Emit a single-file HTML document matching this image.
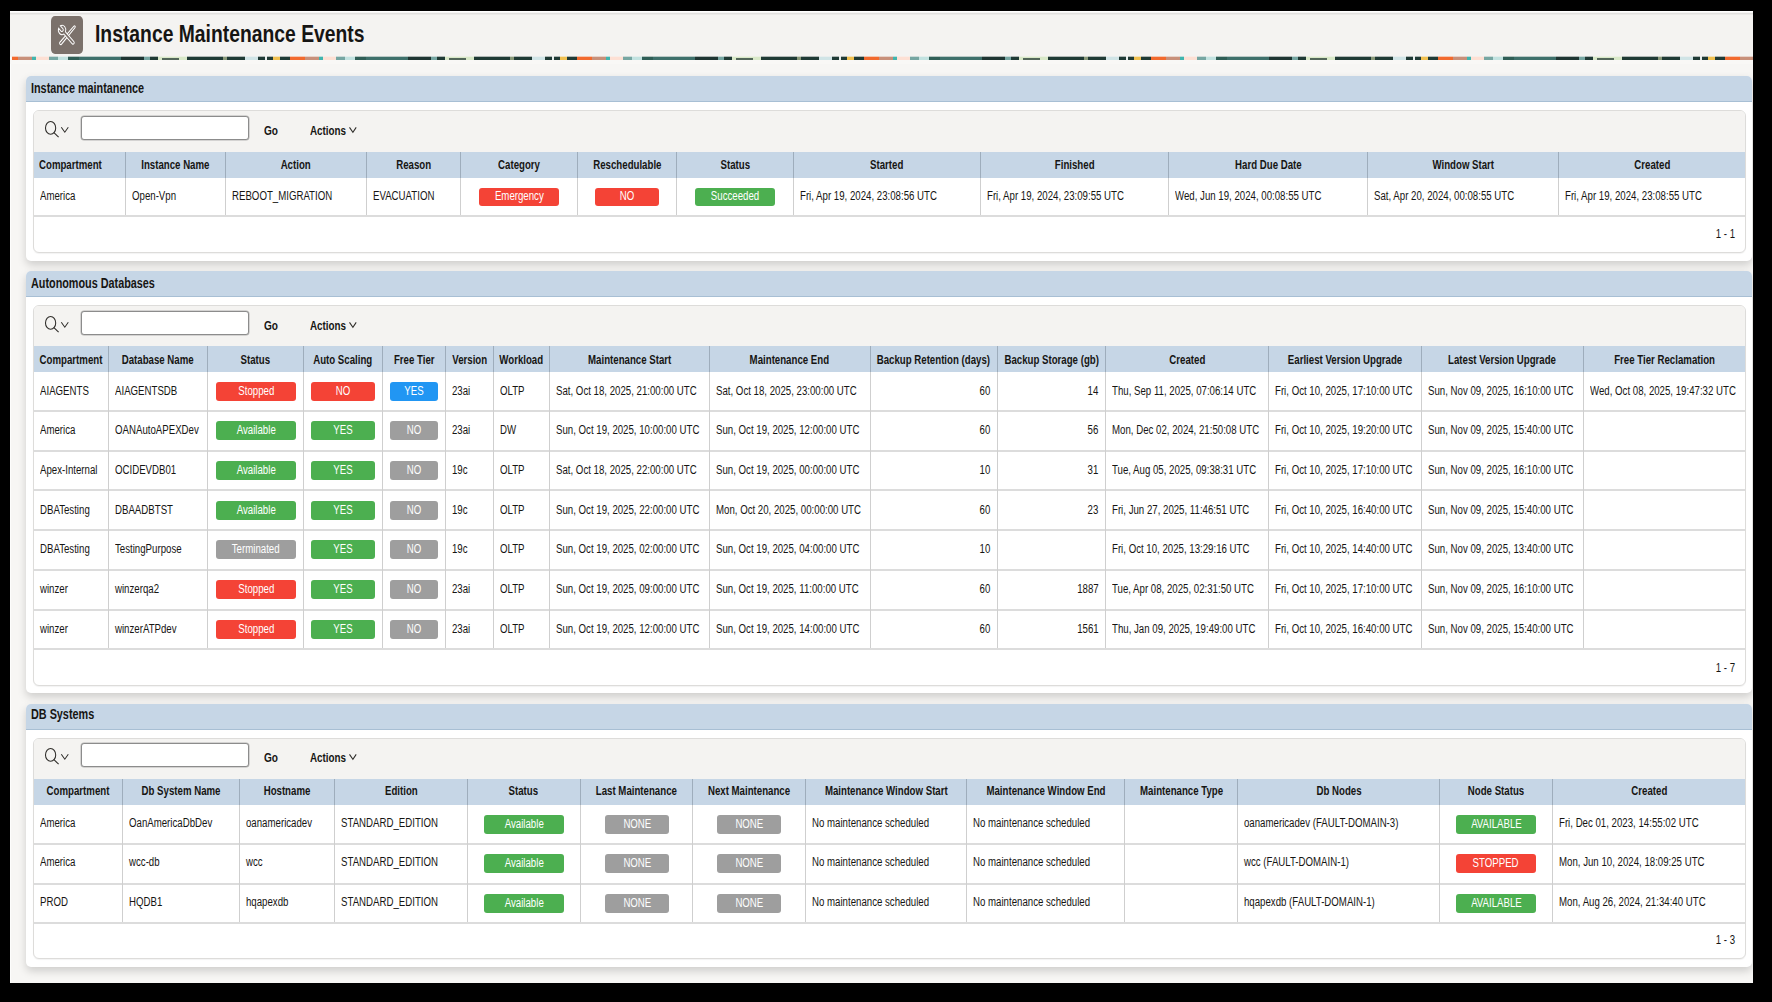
<!DOCTYPE html>
<html><head><meta charset="utf-8"><style>
html,body{margin:0;padding:0}
body{width:1772px;height:1002px;background:#000;position:relative;overflow:hidden;font-family:"Liberation Sans",sans-serif}
.t{position:absolute;white-space:nowrap;line-height:1;transform-origin:0 0;transform:scaleX(0.805)}
.tc{position:absolute;white-space:nowrap;line-height:1;text-align:center}
.tc span{display:inline-block;transform:scaleX(0.805);transform-origin:50% 0}
.tr{position:absolute;white-space:nowrap;line-height:1;text-align:right}
.tr span{display:inline-block;transform:scaleX(0.805);transform-origin:100% 0}
.band2{background-image:linear-gradient(90deg,transparent 0px 12px,#3a4f45 12px 29px,transparent 29px 287px);background-size:287px 100%;background-repeat:repeat-x;background-position:138px 0;opacity:.85}.band{background-image:linear-gradient(90deg,#1f3a35 0.0px 7.9px,#d8e8c8 7.9px 37.1px,#1f3a35 37.1px 73.1px,#8a9a7a 73.1px 76.6px,#1f3a35 76.6px 94.8px,#d0e4e6 94.8px 107.8px,#1f3a35 107.8px 115.4px,#e8efee 115.4px 116.9px,#1f3a35 116.9px 123.3px,#f0c050 123.3px 129.6px,#1f3a35 129.6px 139.9px,#f26a2e 139.9px 154.8px,#c8907a 154.8px 168.8px,#40b5ae 168.8px 172.9px,#fde0d4 172.9px 186.0px,#76a6a2 186.0px 195.0px,#c2e2e0 195.0px 205.4px,#2f5e56 205.4px 215.8px,#3e706b 215.8px 258.2px,#1e3532 258.2px 280.8px,#76a6a2 280.8px 287.0px);background-size:287px 100%;background-repeat:repeat-x;background-position:138px 0}
</style></head><body>
<div style="position:absolute;left:10px;top:11px;width:1743px;height:972px;background:#f7f6f4;"></div>
<div style="position:absolute;left:10px;top:11px;width:1px;height:972px;background:#fdfdfc;"></div>
<div style="position:absolute;left:10px;top:11px;width:1743px;height:1px;background:#ffffff;"></div>
<div style="position:absolute;left:10px;top:12px;width:1743px;height:1px;background:#f6f5f4;"></div>
<div style="position:absolute;left:10px;top:13px;width:1743px;height:1px;background:#e1e0de;"></div>
<div style="position:absolute;left:10px;top:14px;width:1743px;height:1px;background:#ebeae8;"></div>
<div style="position:absolute;left:10px;top:15px;width:1743px;height:42px;background:#f4f3f1;"></div>
<div class="band" style="position:absolute;left:12px;top:56px;width:1741px;height:5px"></div>
<div style="position:absolute;left:12px;top:56px;width:1741px;height:1px;background:rgba(244,243,241,.68)"></div>
<div style="position:absolute;left:12px;top:60px;width:1741px;height:1px;background:rgba(249,248,246,.8)"></div>
<div class="band2" style="position:absolute;left:12px;top:58px;width:1741px;height:2px"></div>
<div style="position:absolute;left:10px;top:60px;width:1743px;height:4px;background:#f9f8f6;"></div>
<div style="position:absolute;left:51px;top:16px;width:32px;height:38px;background:#7b716b;border-radius:4px/5px"></div>
<svg style="position:absolute;left:51px;top:16px" width="32" height="38" viewBox="0 0 40 38" preserveAspectRatio="none"><g transform="translate(20.2 18.6) scale(0.88) translate(-20.2 -18.6)">
<path d="M12.10 29.56 L31.36 10.60 A1.1 1.1 0 0 0 29.84 9.00 L9.90 27.24 A1.6 1.6 0 0 0 12.10 29.56 Z" fill="#7b716b" stroke="#fff" stroke-width="1.3"/>
<path d="M27.45 29.05 L15.54 18.05 A5.3 5.3 0 0 1 8.08 11.44 L11.49 14.59 A1.9 1.9 0 0 0 14.07 11.80 L10.65 8.65 A5.3 5.3 0 0 1 17.84 15.56 L29.75 26.55 A1.7 1.7 0 0 1 27.45 29.05 Z" fill="#7b716b" stroke="#fff" stroke-width="1.3"/>
</g></svg>
<div class="t" style="left:95.4px;top:21.88px;font-size:24px;font-weight:bold;color:#161513;">Instance Maintenance Events</div>
<div style="position:absolute;left:26px;top:76px;width:1726px;height:185px;background:#fff;border-radius:5px;box-shadow:0 4px 8px rgba(0,0,0,.17)"></div>
<div style="position:absolute;left:26px;top:76px;width:1726px;height:26px;background:#c6d6e6;border-radius:5px 5px 0 0;border-bottom:1px solid #a8bfd4;box-sizing:border-box"></div>
<div class="t" style="left:31px;top:80.75px;font-size:14px;font-weight:bold;color:#161513;transform:scaleX(0.773)">Instance maintanence</div>
<div style="position:absolute;left:33px;top:110px;width:1713px;height:143px;background:#fff;border:1px solid #dddcda;border-radius:6px;box-sizing:border-box;overflow:hidden;box-shadow:0 1px 1px rgba(0,0,0,.05)"><div style="position:absolute;left:0;top:0;right:0;height:40.5px;background:#f4f3f1"></div></div>
<svg style="position:absolute;left:43px;top:120px" width="28" height="20" viewBox="0 0 28 20">
<ellipse cx="7.6" cy="7.9" rx="5.1" ry="6.4" fill="none" stroke="#2f2d2a" stroke-width="1.05"/>
<line x1="10.9" y1="12.6" x2="15.6" y2="17.2" stroke="#2f2d2a" stroke-width="1.1"/>
<polyline points="18.3,7.3 21.8,12.2 25.3,7.3" fill="none" stroke="#2f2d2a" stroke-width="1.05"/>
</svg>
<div style="position:absolute;left:81px;top:115.6px;width:168px;height:24px;background:#fff;border:1px solid #8c8c8c;box-shadow:0 0 0 0.5px rgba(140,140,140,.6);border-radius:3px;box-sizing:border-box"></div>
<div class="t" style="left:264.0px;top:124.64px;font-size:12px;font-weight:bold;color:#161513;transform:scaleX(0.84)">Go</div>
<div class="t" style="left:310.4px;top:124.64px;font-size:12px;font-weight:bold;color:#161513;transform:scaleX(0.82)">Actions</div>
<svg style="position:absolute;left:346px;top:124px" width="14" height="12" viewBox="0 0 14 12">
<polyline points="3.5,3.4 6.9,8.3 10.2,3.4" fill="none" stroke="#2f2d2a" stroke-width="1.05"/></svg>
<div style="position:absolute;left:33.5px;top:151.5px;width:1711.9px;height:26.0px;background:#c6d6e6;"></div>
<div style="position:absolute;left:33.5px;top:215px;width:1711.9px;height:2px;background:#dcdcdc;"></div>
<div style="position:absolute;left:124.9px;top:151.5px;width:1.0px;height:26.0px;background:#9eadbc;"></div>
<div style="position:absolute;left:124.9px;top:177.5px;width:1.0px;height:37.5px;background:#cfcfcf;"></div>
<div style="position:absolute;left:225.1px;top:151.5px;width:1.0px;height:26.0px;background:#9eadbc;"></div>
<div style="position:absolute;left:225.1px;top:177.5px;width:1.0px;height:37.5px;background:#cfcfcf;"></div>
<div style="position:absolute;left:366.2px;top:151.5px;width:1.0px;height:26.0px;background:#9eadbc;"></div>
<div style="position:absolute;left:366.2px;top:177.5px;width:1.0px;height:37.5px;background:#cfcfcf;"></div>
<div style="position:absolute;left:460.1px;top:151.5px;width:1.0px;height:26.0px;background:#9eadbc;"></div>
<div style="position:absolute;left:460.1px;top:177.5px;width:1.0px;height:37.5px;background:#cfcfcf;"></div>
<div style="position:absolute;left:577.0px;top:151.5px;width:1.0px;height:26.0px;background:#9eadbc;"></div>
<div style="position:absolute;left:577.0px;top:177.5px;width:1.0px;height:37.5px;background:#cfcfcf;"></div>
<div style="position:absolute;left:676.1px;top:151.5px;width:1.0px;height:26.0px;background:#9eadbc;"></div>
<div style="position:absolute;left:676.1px;top:177.5px;width:1.0px;height:37.5px;background:#cfcfcf;"></div>
<div style="position:absolute;left:793.1px;top:151.5px;width:1.0px;height:26.0px;background:#9eadbc;"></div>
<div style="position:absolute;left:793.1px;top:177.5px;width:1.0px;height:37.5px;background:#cfcfcf;"></div>
<div style="position:absolute;left:979.9px;top:151.5px;width:1.0px;height:26.0px;background:#9eadbc;"></div>
<div style="position:absolute;left:979.9px;top:177.5px;width:1.0px;height:37.5px;background:#cfcfcf;"></div>
<div style="position:absolute;left:1168.1px;top:151.5px;width:1.0px;height:26.0px;background:#9eadbc;"></div>
<div style="position:absolute;left:1168.1px;top:177.5px;width:1.0px;height:37.5px;background:#cfcfcf;"></div>
<div style="position:absolute;left:1367.0px;top:151.5px;width:1.0px;height:26.0px;background:#9eadbc;"></div>
<div style="position:absolute;left:1367.0px;top:177.5px;width:1.0px;height:37.5px;background:#cfcfcf;"></div>
<div style="position:absolute;left:1558.1px;top:151.5px;width:1.0px;height:26.0px;background:#9eadbc;"></div>
<div style="position:absolute;left:1558.1px;top:177.5px;width:1.0px;height:37.5px;background:#cfcfcf;"></div>
<div class="t" style="left:38.7px;top:158.54px;font-size:12px;font-weight:bold;color:#161513;">Compartment</div>
<div class="tc" style="left:-124.50px;width:600px;top:158.54px;font-size:12px;font-weight:bold;color:#161513;"><span>Instance Name</span></div>
<div class="tc" style="left:-3.85px;width:600px;top:158.54px;font-size:12px;font-weight:bold;color:#161513;"><span>Action</span></div>
<div class="tc" style="left:113.65px;width:600px;top:158.54px;font-size:12px;font-weight:bold;color:#161513;"><span>Reason</span></div>
<div class="tc" style="left:219.05px;width:600px;top:158.54px;font-size:12px;font-weight:bold;color:#161513;"><span>Category</span></div>
<div class="tc" style="left:327.05px;width:600px;top:158.54px;font-size:12px;font-weight:bold;color:#161513;"><span>Reschedulable</span></div>
<div class="tc" style="left:435.10px;width:600px;top:158.54px;font-size:12px;font-weight:bold;color:#161513;"><span>Status</span></div>
<div class="tc" style="left:587.00px;width:600px;top:158.54px;font-size:12px;font-weight:bold;color:#161513;"><span>Started</span></div>
<div class="tc" style="left:774.50px;width:600px;top:158.54px;font-size:12px;font-weight:bold;color:#161513;"><span>Finished</span></div>
<div class="tc" style="left:968.05px;width:600px;top:158.54px;font-size:12px;font-weight:bold;color:#161513;"><span>Hard Due Date</span></div>
<div class="tc" style="left:1163.05px;width:600px;top:158.54px;font-size:12px;font-weight:bold;color:#161513;"><span>Window Start</span></div>
<div class="tc" style="left:1352.00px;width:600px;top:158.54px;font-size:12px;font-weight:bold;color:#161513;"><span>Created</span></div>
<div class="t" style="left:39.8px;top:190.04px;font-size:12px;color:#161513;">America</div>
<div class="t" style="left:131.70000000000002px;top:190.04px;font-size:12px;color:#161513;">Open-Vpn</div>
<div class="t" style="left:231.9px;top:190.04px;font-size:12px;color:#161513;">REBOOT_MIGRATION</div>
<div class="t" style="left:373.0px;top:190.04px;font-size:12px;color:#161513;">EVACUATION</div>
<div style="position:absolute;left:479.0px;top:188.0px;width:80px;height:18px;background:#f44336;border-radius:3px"></div>
<div class="tc" style="left:219.00px;width:600px;top:190.04px;font-size:12px;color:#fff;"><span>Emergency</span></div>
<div style="position:absolute;left:595.0px;top:188.0px;width:64px;height:18px;background:#f44336;border-radius:3px"></div>
<div class="tc" style="left:327.00px;width:600px;top:190.04px;font-size:12px;color:#fff;"><span>NO</span></div>
<div style="position:absolute;left:695.0px;top:188.0px;width:80px;height:18px;background:#4caf50;border-radius:3px"></div>
<div class="tc" style="left:435.00px;width:600px;top:190.04px;font-size:12px;color:#fff;"><span>Succeeded</span></div>
<div class="t" style="left:799.9px;top:190.04px;font-size:12px;color:#161513;">Fri, Apr 19, 2024, 23:08:56 UTC</div>
<div class="t" style="left:986.6999999999999px;top:190.04px;font-size:12px;color:#161513;">Fri, Apr 19, 2024, 23:09:55 UTC</div>
<div class="t" style="left:1174.8999999999999px;top:190.04px;font-size:12px;color:#161513;">Wed, Jun 19, 2024, 00:08:55 UTC</div>
<div class="t" style="left:1373.8px;top:190.04px;font-size:12px;color:#161513;">Sat, Apr 20, 2024, 00:08:55 UTC</div>
<div class="t" style="left:1564.8999999999999px;top:190.04px;font-size:12px;color:#161513;">Fri, Apr 19, 2024, 23:08:55 UTC</div>
<div class="tr" style="left:1335px;width:400px;top:228.24px;font-size:12px;color:#161513;"><span>1 - 1</span></div>
<div style="position:absolute;left:26px;top:271px;width:1726px;height:422px;background:#fff;border-radius:5px;box-shadow:0 4px 8px rgba(0,0,0,.17)"></div>
<div style="position:absolute;left:26px;top:271px;width:1726px;height:26px;background:#c6d6e6;border-radius:5px 5px 0 0;border-bottom:1px solid #a8bfd4;box-sizing:border-box"></div>
<div class="t" style="left:31px;top:275.95px;font-size:14px;font-weight:bold;color:#161513;transform:scaleX(0.773)">Autonomous Databases</div>
<div style="position:absolute;left:33px;top:305px;width:1713px;height:381px;background:#fff;border:1px solid #dddcda;border-radius:6px;box-sizing:border-box;overflow:hidden;box-shadow:0 1px 1px rgba(0,0,0,.05)"><div style="position:absolute;left:0;top:0;right:0;height:40.19999999999999px;background:#f4f3f1"></div></div>
<svg style="position:absolute;left:43px;top:315px" width="28" height="20" viewBox="0 0 28 20">
<ellipse cx="7.6" cy="7.9" rx="5.1" ry="6.4" fill="none" stroke="#2f2d2a" stroke-width="1.05"/>
<line x1="10.9" y1="12.6" x2="15.6" y2="17.2" stroke="#2f2d2a" stroke-width="1.1"/>
<polyline points="18.3,7.3 21.8,12.2 25.3,7.3" fill="none" stroke="#2f2d2a" stroke-width="1.05"/>
</svg>
<div style="position:absolute;left:81px;top:310.6px;width:168px;height:24px;background:#fff;border:1px solid #8c8c8c;box-shadow:0 0 0 0.5px rgba(140,140,140,.6);border-radius:3px;box-sizing:border-box"></div>
<div class="t" style="left:264.0px;top:319.64px;font-size:12px;font-weight:bold;color:#161513;transform:scaleX(0.84)">Go</div>
<div class="t" style="left:310.4px;top:319.64px;font-size:12px;font-weight:bold;color:#161513;transform:scaleX(0.82)">Actions</div>
<svg style="position:absolute;left:346px;top:319px" width="14" height="12" viewBox="0 0 14 12">
<polyline points="3.5,3.4 6.9,8.3 10.2,3.4" fill="none" stroke="#2f2d2a" stroke-width="1.05"/></svg>
<div style="position:absolute;left:33.5px;top:346.2px;width:1711.9px;height:25.600000000000023px;background:#c6d6e6;"></div>
<div style="position:absolute;left:33.5px;top:410.1px;width:1711.9px;height:2.0px;background:#dcdcdc;"></div>
<div style="position:absolute;left:33.5px;top:449.6px;width:1711.9px;height:2.0px;background:#dcdcdc;"></div>
<div style="position:absolute;left:33.5px;top:489.4px;width:1711.9px;height:2.0px;background:#dcdcdc;"></div>
<div style="position:absolute;left:33.5px;top:529.2px;width:1711.9px;height:2.0px;background:#dcdcdc;"></div>
<div style="position:absolute;left:33.5px;top:568.8px;width:1711.9px;height:2.0px;background:#dcdcdc;"></div>
<div style="position:absolute;left:33.5px;top:608.6px;width:1711.9px;height:2.0px;background:#dcdcdc;"></div>
<div style="position:absolute;left:33.5px;top:648.1px;width:1711.9px;height:2.0px;background:#dcdcdc;"></div>
<div style="position:absolute;left:107.8px;top:346.2px;width:1.0px;height:25.600000000000023px;background:#9eadbc;"></div>
<div style="position:absolute;left:107.8px;top:371.8px;width:1.0px;height:276.3px;background:#cfcfcf;"></div>
<div style="position:absolute;left:207.0px;top:346.2px;width:1.0px;height:25.600000000000023px;background:#9eadbc;"></div>
<div style="position:absolute;left:207.0px;top:371.8px;width:1.0px;height:276.3px;background:#cfcfcf;"></div>
<div style="position:absolute;left:302.9px;top:346.2px;width:1.0px;height:25.600000000000023px;background:#9eadbc;"></div>
<div style="position:absolute;left:302.9px;top:371.8px;width:1.0px;height:276.3px;background:#cfcfcf;"></div>
<div style="position:absolute;left:382.1px;top:346.2px;width:1.0px;height:25.600000000000023px;background:#9eadbc;"></div>
<div style="position:absolute;left:382.1px;top:371.8px;width:1.0px;height:276.3px;background:#cfcfcf;"></div>
<div style="position:absolute;left:445.1px;top:346.2px;width:1.0px;height:25.600000000000023px;background:#9eadbc;"></div>
<div style="position:absolute;left:445.1px;top:371.8px;width:1.0px;height:276.3px;background:#cfcfcf;"></div>
<div style="position:absolute;left:492.8px;top:346.2px;width:1.0px;height:25.600000000000023px;background:#9eadbc;"></div>
<div style="position:absolute;left:492.8px;top:371.8px;width:1.0px;height:276.3px;background:#cfcfcf;"></div>
<div style="position:absolute;left:548.9px;top:346.2px;width:1.0px;height:25.600000000000023px;background:#9eadbc;"></div>
<div style="position:absolute;left:548.9px;top:371.8px;width:1.0px;height:276.3px;background:#cfcfcf;"></div>
<div style="position:absolute;left:708.9px;top:346.2px;width:1.0px;height:25.600000000000023px;background:#9eadbc;"></div>
<div style="position:absolute;left:708.9px;top:371.8px;width:1.0px;height:276.3px;background:#cfcfcf;"></div>
<div style="position:absolute;left:869.7px;top:346.2px;width:1.0px;height:25.600000000000023px;background:#9eadbc;"></div>
<div style="position:absolute;left:869.7px;top:371.8px;width:1.0px;height:276.3px;background:#cfcfcf;"></div>
<div style="position:absolute;left:997.0px;top:346.2px;width:1.0px;height:25.600000000000023px;background:#9eadbc;"></div>
<div style="position:absolute;left:997.0px;top:371.8px;width:1.0px;height:276.3px;background:#cfcfcf;"></div>
<div style="position:absolute;left:1104.9px;top:346.2px;width:1.0px;height:25.600000000000023px;background:#9eadbc;"></div>
<div style="position:absolute;left:1104.9px;top:371.8px;width:1.0px;height:276.3px;background:#cfcfcf;"></div>
<div style="position:absolute;left:1267.9px;top:346.2px;width:1.0px;height:25.600000000000023px;background:#9eadbc;"></div>
<div style="position:absolute;left:1267.9px;top:371.8px;width:1.0px;height:276.3px;background:#cfcfcf;"></div>
<div style="position:absolute;left:1421.0px;top:346.2px;width:1.0px;height:25.600000000000023px;background:#9eadbc;"></div>
<div style="position:absolute;left:1421.0px;top:371.8px;width:1.0px;height:276.3px;background:#cfcfcf;"></div>
<div style="position:absolute;left:1583.0px;top:346.2px;width:1.0px;height:25.600000000000023px;background:#9eadbc;"></div>
<div style="position:absolute;left:1583.0px;top:371.8px;width:1.0px;height:276.3px;background:#cfcfcf;"></div>
<div class="tc" style="left:-229.10px;width:600px;top:353.59px;font-size:12px;font-weight:bold;color:#161513;"><span>Compartment</span></div>
<div class="tc" style="left:-142.10px;width:600px;top:353.59px;font-size:12px;font-weight:bold;color:#161513;"><span>Database Name</span></div>
<div class="tc" style="left:-44.55px;width:600px;top:353.59px;font-size:12px;font-weight:bold;color:#161513;"><span>Status</span></div>
<div class="tc" style="left:43.00px;width:600px;top:353.59px;font-size:12px;font-weight:bold;color:#161513;"><span>Auto Scaling</span></div>
<div class="tc" style="left:114.10px;width:600px;top:353.59px;font-size:12px;font-weight:bold;color:#161513;"><span>Free Tier</span></div>
<div class="tc" style="left:169.45px;width:600px;top:353.59px;font-size:12px;font-weight:bold;color:#161513;"><span>Version</span></div>
<div class="tc" style="left:221.35px;width:600px;top:353.59px;font-size:12px;font-weight:bold;color:#161513;"><span>Workload</span></div>
<div class="tc" style="left:329.40px;width:600px;top:353.59px;font-size:12px;font-weight:bold;color:#161513;"><span>Maintenance Start</span></div>
<div class="tc" style="left:489.80px;width:600px;top:353.59px;font-size:12px;font-weight:bold;color:#161513;"><span>Maintenance End</span></div>
<div class="tc" style="left:633.85px;width:600px;top:353.59px;font-size:12px;font-weight:bold;color:#161513;"><span>Backup Retention (days)</span></div>
<div class="tc" style="left:751.45px;width:600px;top:353.59px;font-size:12px;font-weight:bold;color:#161513;"><span>Backup Storage (gb)</span></div>
<div class="tc" style="left:886.90px;width:600px;top:353.59px;font-size:12px;font-weight:bold;color:#161513;"><span>Created</span></div>
<div class="tc" style="left:1044.95px;width:600px;top:353.59px;font-size:12px;font-weight:bold;color:#161513;"><span>Earliest Version Upgrade</span></div>
<div class="tc" style="left:1202.50px;width:600px;top:353.59px;font-size:12px;font-weight:bold;color:#161513;"><span>Latest Version Upgrade</span></div>
<div class="tc" style="left:1364.45px;width:600px;top:353.59px;font-size:12px;font-weight:bold;color:#161513;"><span>Free Tier Reclamation</span></div>
<div class="t" style="left:39.8px;top:384.94px;font-size:12px;color:#161513;">AIAGENTS</div>
<div class="t" style="left:114.6px;top:384.94px;font-size:12px;color:#161513;">AIAGENTSDB</div>
<div style="position:absolute;left:216.0px;top:382.0px;width:80px;height:19px;background:#f44336;border-radius:3px"></div>
<div class="tc" style="left:-44.00px;width:600px;top:385.04px;font-size:12px;color:#fff;"><span>Stopped</span></div>
<div style="position:absolute;left:311.0px;top:382.0px;width:64px;height:19px;background:#f44336;border-radius:3px"></div>
<div class="tc" style="left:43.00px;width:600px;top:385.04px;font-size:12px;color:#fff;"><span>NO</span></div>
<div style="position:absolute;left:390.0px;top:382.0px;width:48px;height:19px;background:#2196f3;border-radius:3px"></div>
<div class="tc" style="left:114.00px;width:600px;top:385.04px;font-size:12px;color:#fff;"><span>YES</span></div>
<div class="t" style="left:451.90000000000003px;top:384.94px;font-size:12px;color:#161513;">23ai</div>
<div class="t" style="left:499.6px;top:384.94px;font-size:12px;color:#161513;">OLTP</div>
<div class="t" style="left:555.6999999999999px;top:384.94px;font-size:12px;color:#161513;">Sat, Oct 18, 2025, 21:00:00 UTC</div>
<div class="t" style="left:715.6999999999999px;top:384.94px;font-size:12px;color:#161513;">Sat, Oct 18, 2025, 23:00:00 UTC</div>
<div class="tr" style="left:590.5px;width:400px;top:384.94px;font-size:12px;color:#161513;"><span>60</span></div>
<div class="tr" style="left:698.4000000000001px;width:400px;top:384.94px;font-size:12px;color:#161513;"><span>14</span></div>
<div class="t" style="left:1111.7px;top:384.94px;font-size:12px;color:#161513;">Thu, Sep 11, 2025, 07:06:14 UTC</div>
<div class="t" style="left:1274.7px;top:384.94px;font-size:12px;color:#161513;">Fri, Oct 10, 2025, 17:10:00 UTC</div>
<div class="t" style="left:1427.8px;top:384.94px;font-size:12px;color:#161513;">Sun, Nov 09, 2025, 16:10:00 UTC</div>
<div class="t" style="left:1589.8px;top:384.94px;font-size:12px;color:#161513;">Wed, Oct 08, 2025, 19:47:32 UTC</div>
<div class="t" style="left:39.8px;top:424.44px;font-size:12px;color:#161513;">America</div>
<div class="t" style="left:114.6px;top:424.44px;font-size:12px;color:#161513;">OANAutoAPEXDev</div>
<div style="position:absolute;left:216.0px;top:421.0px;width:80px;height:19px;background:#4caf50;border-radius:3px"></div>
<div class="tc" style="left:-44.00px;width:600px;top:424.04px;font-size:12px;color:#fff;"><span>Available</span></div>
<div style="position:absolute;left:311.0px;top:421.0px;width:64px;height:19px;background:#4caf50;border-radius:3px"></div>
<div class="tc" style="left:43.00px;width:600px;top:424.04px;font-size:12px;color:#fff;"><span>YES</span></div>
<div style="position:absolute;left:390.0px;top:421.0px;width:48px;height:19px;background:#9e9e9e;border-radius:3px"></div>
<div class="tc" style="left:114.00px;width:600px;top:424.04px;font-size:12px;color:#fff;"><span>NO</span></div>
<div class="t" style="left:451.90000000000003px;top:424.44px;font-size:12px;color:#161513;">23ai</div>
<div class="t" style="left:499.6px;top:424.44px;font-size:12px;color:#161513;">DW</div>
<div class="t" style="left:555.6999999999999px;top:424.44px;font-size:12px;color:#161513;">Sun, Oct 19, 2025, 10:00:00 UTC</div>
<div class="t" style="left:715.6999999999999px;top:424.44px;font-size:12px;color:#161513;">Sun, Oct 19, 2025, 12:00:00 UTC</div>
<div class="tr" style="left:590.5px;width:400px;top:424.44px;font-size:12px;color:#161513;"><span>60</span></div>
<div class="tr" style="left:698.4000000000001px;width:400px;top:424.44px;font-size:12px;color:#161513;"><span>56</span></div>
<div class="t" style="left:1111.7px;top:424.44px;font-size:12px;color:#161513;">Mon, Dec 02, 2024, 21:50:08 UTC</div>
<div class="t" style="left:1274.7px;top:424.44px;font-size:12px;color:#161513;">Fri, Oct 10, 2025, 19:20:00 UTC</div>
<div class="t" style="left:1427.8px;top:424.44px;font-size:12px;color:#161513;">Sun, Nov 09, 2025, 15:40:00 UTC</div>
<div class="t" style="left:39.8px;top:464.04px;font-size:12px;color:#161513;">Apex-Internal</div>
<div class="t" style="left:114.6px;top:464.04px;font-size:12px;color:#161513;">OCIDEVDB01</div>
<div style="position:absolute;left:216.0px;top:461.0px;width:80px;height:19px;background:#4caf50;border-radius:3px"></div>
<div class="tc" style="left:-44.00px;width:600px;top:464.04px;font-size:12px;color:#fff;"><span>Available</span></div>
<div style="position:absolute;left:311.0px;top:461.0px;width:64px;height:19px;background:#4caf50;border-radius:3px"></div>
<div class="tc" style="left:43.00px;width:600px;top:464.04px;font-size:12px;color:#fff;"><span>YES</span></div>
<div style="position:absolute;left:390.0px;top:461.0px;width:48px;height:19px;background:#9e9e9e;border-radius:3px"></div>
<div class="tc" style="left:114.00px;width:600px;top:464.04px;font-size:12px;color:#fff;"><span>NO</span></div>
<div class="t" style="left:451.90000000000003px;top:464.04px;font-size:12px;color:#161513;">19c</div>
<div class="t" style="left:499.6px;top:464.04px;font-size:12px;color:#161513;">OLTP</div>
<div class="t" style="left:555.6999999999999px;top:464.04px;font-size:12px;color:#161513;">Sat, Oct 18, 2025, 22:00:00 UTC</div>
<div class="t" style="left:715.6999999999999px;top:464.04px;font-size:12px;color:#161513;">Sun, Oct 19, 2025, 00:00:00 UTC</div>
<div class="tr" style="left:590.5px;width:400px;top:464.04px;font-size:12px;color:#161513;"><span>10</span></div>
<div class="tr" style="left:698.4000000000001px;width:400px;top:464.04px;font-size:12px;color:#161513;"><span>31</span></div>
<div class="t" style="left:1111.7px;top:464.04px;font-size:12px;color:#161513;">Tue, Aug 05, 2025, 09:38:31 UTC</div>
<div class="t" style="left:1274.7px;top:464.04px;font-size:12px;color:#161513;">Fri, Oct 10, 2025, 17:10:00 UTC</div>
<div class="t" style="left:1427.8px;top:464.04px;font-size:12px;color:#161513;">Sun, Nov 09, 2025, 16:10:00 UTC</div>
<div class="t" style="left:39.8px;top:504.24px;font-size:12px;color:#161513;">DBATesting</div>
<div class="t" style="left:114.6px;top:504.24px;font-size:12px;color:#161513;">DBAADBTST</div>
<div style="position:absolute;left:216.0px;top:501.0px;width:80px;height:19px;background:#4caf50;border-radius:3px"></div>
<div class="tc" style="left:-44.00px;width:600px;top:504.04px;font-size:12px;color:#fff;"><span>Available</span></div>
<div style="position:absolute;left:311.0px;top:501.0px;width:64px;height:19px;background:#4caf50;border-radius:3px"></div>
<div class="tc" style="left:43.00px;width:600px;top:504.04px;font-size:12px;color:#fff;"><span>YES</span></div>
<div style="position:absolute;left:390.0px;top:501.0px;width:48px;height:19px;background:#9e9e9e;border-radius:3px"></div>
<div class="tc" style="left:114.00px;width:600px;top:504.04px;font-size:12px;color:#fff;"><span>NO</span></div>
<div class="t" style="left:451.90000000000003px;top:504.24px;font-size:12px;color:#161513;">19c</div>
<div class="t" style="left:499.6px;top:504.24px;font-size:12px;color:#161513;">OLTP</div>
<div class="t" style="left:555.6999999999999px;top:504.24px;font-size:12px;color:#161513;">Sun, Oct 19, 2025, 22:00:00 UTC</div>
<div class="t" style="left:715.6999999999999px;top:504.24px;font-size:12px;color:#161513;">Mon, Oct 20, 2025, 00:00:00 UTC</div>
<div class="tr" style="left:590.5px;width:400px;top:504.24px;font-size:12px;color:#161513;"><span>60</span></div>
<div class="tr" style="left:698.4000000000001px;width:400px;top:504.24px;font-size:12px;color:#161513;"><span>23</span></div>
<div class="t" style="left:1111.7px;top:504.24px;font-size:12px;color:#161513;">Fri, Jun 27, 2025, 11:46:51 UTC</div>
<div class="t" style="left:1274.7px;top:504.24px;font-size:12px;color:#161513;">Fri, Oct 10, 2025, 16:40:00 UTC</div>
<div class="t" style="left:1427.8px;top:504.24px;font-size:12px;color:#161513;">Sun, Nov 09, 2025, 15:40:00 UTC</div>
<div class="t" style="left:39.8px;top:543.14px;font-size:12px;color:#161513;">DBATesting</div>
<div class="t" style="left:114.6px;top:543.14px;font-size:12px;color:#161513;">TestingPurpose</div>
<div style="position:absolute;left:216.0px;top:540.0px;width:80px;height:19px;background:#9e9e9e;border-radius:3px"></div>
<div class="tc" style="left:-44.00px;width:600px;top:543.04px;font-size:12px;color:#fff;"><span>Terminated</span></div>
<div style="position:absolute;left:311.0px;top:540.0px;width:64px;height:19px;background:#4caf50;border-radius:3px"></div>
<div class="tc" style="left:43.00px;width:600px;top:543.04px;font-size:12px;color:#fff;"><span>YES</span></div>
<div style="position:absolute;left:390.0px;top:540.0px;width:48px;height:19px;background:#9e9e9e;border-radius:3px"></div>
<div class="tc" style="left:114.00px;width:600px;top:543.04px;font-size:12px;color:#fff;"><span>NO</span></div>
<div class="t" style="left:451.90000000000003px;top:543.14px;font-size:12px;color:#161513;">19c</div>
<div class="t" style="left:499.6px;top:543.14px;font-size:12px;color:#161513;">OLTP</div>
<div class="t" style="left:555.6999999999999px;top:543.14px;font-size:12px;color:#161513;">Sun, Oct 19, 2025, 02:00:00 UTC</div>
<div class="t" style="left:715.6999999999999px;top:543.14px;font-size:12px;color:#161513;">Sun, Oct 19, 2025, 04:00:00 UTC</div>
<div class="tr" style="left:590.5px;width:400px;top:543.14px;font-size:12px;color:#161513;"><span>10</span></div>
<div class="t" style="left:1111.7px;top:543.14px;font-size:12px;color:#161513;">Fri, Oct 10, 2025, 13:29:16 UTC</div>
<div class="t" style="left:1274.7px;top:543.14px;font-size:12px;color:#161513;">Fri, Oct 10, 2025, 14:40:00 UTC</div>
<div class="t" style="left:1427.8px;top:543.14px;font-size:12px;color:#161513;">Sun, Nov 09, 2025, 13:40:00 UTC</div>
<div class="t" style="left:39.8px;top:582.94px;font-size:12px;color:#161513;">winzer</div>
<div class="t" style="left:114.6px;top:582.94px;font-size:12px;color:#161513;">winzerqa2</div>
<div style="position:absolute;left:216.0px;top:580.0px;width:80px;height:19px;background:#f44336;border-radius:3px"></div>
<div class="tc" style="left:-44.00px;width:600px;top:583.04px;font-size:12px;color:#fff;"><span>Stopped</span></div>
<div style="position:absolute;left:311.0px;top:580.0px;width:64px;height:19px;background:#4caf50;border-radius:3px"></div>
<div class="tc" style="left:43.00px;width:600px;top:583.04px;font-size:12px;color:#fff;"><span>YES</span></div>
<div style="position:absolute;left:390.0px;top:580.0px;width:48px;height:19px;background:#9e9e9e;border-radius:3px"></div>
<div class="tc" style="left:114.00px;width:600px;top:583.04px;font-size:12px;color:#fff;"><span>NO</span></div>
<div class="t" style="left:451.90000000000003px;top:582.94px;font-size:12px;color:#161513;">23ai</div>
<div class="t" style="left:499.6px;top:582.94px;font-size:12px;color:#161513;">OLTP</div>
<div class="t" style="left:555.6999999999999px;top:582.94px;font-size:12px;color:#161513;">Sun, Oct 19, 2025, 09:00:00 UTC</div>
<div class="t" style="left:715.6999999999999px;top:582.94px;font-size:12px;color:#161513;">Sun, Oct 19, 2025, 11:00:00 UTC</div>
<div class="tr" style="left:590.5px;width:400px;top:582.94px;font-size:12px;color:#161513;"><span>60</span></div>
<div class="tr" style="left:698.4000000000001px;width:400px;top:582.94px;font-size:12px;color:#161513;"><span>1887</span></div>
<div class="t" style="left:1111.7px;top:582.94px;font-size:12px;color:#161513;">Tue, Apr 08, 2025, 02:31:50 UTC</div>
<div class="t" style="left:1274.7px;top:582.94px;font-size:12px;color:#161513;">Fri, Oct 10, 2025, 17:10:00 UTC</div>
<div class="t" style="left:1427.8px;top:582.94px;font-size:12px;color:#161513;">Sun, Nov 09, 2025, 16:10:00 UTC</div>
<div class="t" style="left:39.8px;top:622.74px;font-size:12px;color:#161513;">winzer</div>
<div class="t" style="left:114.6px;top:622.74px;font-size:12px;color:#161513;">winzerATPdev</div>
<div style="position:absolute;left:216.0px;top:620.0px;width:80px;height:19px;background:#f44336;border-radius:3px"></div>
<div class="tc" style="left:-44.00px;width:600px;top:623.04px;font-size:12px;color:#fff;"><span>Stopped</span></div>
<div style="position:absolute;left:311.0px;top:620.0px;width:64px;height:19px;background:#4caf50;border-radius:3px"></div>
<div class="tc" style="left:43.00px;width:600px;top:623.04px;font-size:12px;color:#fff;"><span>YES</span></div>
<div style="position:absolute;left:390.0px;top:620.0px;width:48px;height:19px;background:#9e9e9e;border-radius:3px"></div>
<div class="tc" style="left:114.00px;width:600px;top:623.04px;font-size:12px;color:#fff;"><span>NO</span></div>
<div class="t" style="left:451.90000000000003px;top:622.74px;font-size:12px;color:#161513;">23ai</div>
<div class="t" style="left:499.6px;top:622.74px;font-size:12px;color:#161513;">OLTP</div>
<div class="t" style="left:555.6999999999999px;top:622.74px;font-size:12px;color:#161513;">Sun, Oct 19, 2025, 12:00:00 UTC</div>
<div class="t" style="left:715.6999999999999px;top:622.74px;font-size:12px;color:#161513;">Sun, Oct 19, 2025, 14:00:00 UTC</div>
<div class="tr" style="left:590.5px;width:400px;top:622.74px;font-size:12px;color:#161513;"><span>60</span></div>
<div class="tr" style="left:698.4000000000001px;width:400px;top:622.74px;font-size:12px;color:#161513;"><span>1561</span></div>
<div class="t" style="left:1111.7px;top:622.74px;font-size:12px;color:#161513;">Thu, Jan 09, 2025, 19:49:00 UTC</div>
<div class="t" style="left:1274.7px;top:622.74px;font-size:12px;color:#161513;">Fri, Oct 10, 2025, 16:40:00 UTC</div>
<div class="t" style="left:1427.8px;top:622.74px;font-size:12px;color:#161513;">Sun, Nov 09, 2025, 15:40:00 UTC</div>
<div class="tr" style="left:1335px;width:400px;top:661.64px;font-size:12px;color:#161513;"><span>1 - 7</span></div>
<div style="position:absolute;left:26px;top:704px;width:1726px;height:263px;background:#fff;border-radius:5px;box-shadow:0 4px 8px rgba(0,0,0,.17)"></div>
<div style="position:absolute;left:26px;top:704px;width:1726px;height:26px;background:#c6d6e6;border-radius:5px 5px 0 0;border-bottom:1px solid #a8bfd4;box-sizing:border-box"></div>
<div class="t" style="left:31px;top:707.45px;font-size:14px;font-weight:bold;color:#161513;transform:scaleX(0.773)">DB Systems</div>
<div style="position:absolute;left:33px;top:738px;width:1713px;height:221px;background:#fff;border:1px solid #dddcda;border-radius:6px;box-sizing:border-box;overflow:hidden;box-shadow:0 1px 1px rgba(0,0,0,.05)"><div style="position:absolute;left:0;top:0;right:0;height:40.39999999999998px;background:#f4f3f1"></div></div>
<svg style="position:absolute;left:43px;top:747px" width="28" height="20" viewBox="0 0 28 20">
<ellipse cx="7.6" cy="7.9" rx="5.1" ry="6.4" fill="none" stroke="#2f2d2a" stroke-width="1.05"/>
<line x1="10.9" y1="12.6" x2="15.6" y2="17.2" stroke="#2f2d2a" stroke-width="1.1"/>
<polyline points="18.3,7.3 21.8,12.2 25.3,7.3" fill="none" stroke="#2f2d2a" stroke-width="1.05"/>
</svg>
<div style="position:absolute;left:81px;top:742.6px;width:168px;height:24px;background:#fff;border:1px solid #8c8c8c;box-shadow:0 0 0 0.5px rgba(140,140,140,.6);border-radius:3px;box-sizing:border-box"></div>
<div class="t" style="left:264.0px;top:751.64px;font-size:12px;font-weight:bold;color:#161513;transform:scaleX(0.84)">Go</div>
<div class="t" style="left:310.4px;top:751.64px;font-size:12px;font-weight:bold;color:#161513;transform:scaleX(0.82)">Actions</div>
<svg style="position:absolute;left:346px;top:751px" width="14" height="12" viewBox="0 0 14 12">
<polyline points="3.5,3.4 6.9,8.3 10.2,3.4" fill="none" stroke="#2f2d2a" stroke-width="1.05"/></svg>
<div style="position:absolute;left:33.5px;top:779.4px;width:1711.9px;height:25.200000000000045px;background:#c6d6e6;"></div>
<div style="position:absolute;left:33.5px;top:842.9px;width:1711.9px;height:2.0px;background:#dcdcdc;"></div>
<div style="position:absolute;left:33.5px;top:882.5px;width:1711.9px;height:2.0px;background:#dcdcdc;"></div>
<div style="position:absolute;left:33.5px;top:922.2px;width:1711.9px;height:2.0px;background:#dcdcdc;"></div>
<div style="position:absolute;left:121.8px;top:779.4px;width:1.0px;height:25.200000000000045px;background:#9eadbc;"></div>
<div style="position:absolute;left:121.8px;top:804.6px;width:1.0px;height:117.60000000000002px;background:#cfcfcf;"></div>
<div style="position:absolute;left:238.9px;top:779.4px;width:1.0px;height:25.200000000000045px;background:#9eadbc;"></div>
<div style="position:absolute;left:238.9px;top:804.6px;width:1.0px;height:117.60000000000002px;background:#cfcfcf;"></div>
<div style="position:absolute;left:333.9px;top:779.4px;width:1.0px;height:25.200000000000045px;background:#9eadbc;"></div>
<div style="position:absolute;left:333.9px;top:804.6px;width:1.0px;height:117.60000000000002px;background:#cfcfcf;"></div>
<div style="position:absolute;left:466.8px;top:779.4px;width:1.0px;height:25.200000000000045px;background:#9eadbc;"></div>
<div style="position:absolute;left:466.8px;top:804.6px;width:1.0px;height:117.60000000000002px;background:#cfcfcf;"></div>
<div style="position:absolute;left:579.8px;top:779.4px;width:1.0px;height:25.200000000000045px;background:#9eadbc;"></div>
<div style="position:absolute;left:579.8px;top:804.6px;width:1.0px;height:117.60000000000002px;background:#cfcfcf;"></div>
<div style="position:absolute;left:691.9px;top:779.4px;width:1.0px;height:25.200000000000045px;background:#9eadbc;"></div>
<div style="position:absolute;left:691.9px;top:804.6px;width:1.0px;height:117.60000000000002px;background:#cfcfcf;"></div>
<div style="position:absolute;left:804.9px;top:779.4px;width:1.0px;height:25.200000000000045px;background:#9eadbc;"></div>
<div style="position:absolute;left:804.9px;top:804.6px;width:1.0px;height:117.60000000000002px;background:#cfcfcf;"></div>
<div style="position:absolute;left:966.2px;top:779.4px;width:1.0px;height:25.200000000000045px;background:#9eadbc;"></div>
<div style="position:absolute;left:966.2px;top:804.6px;width:1.0px;height:117.60000000000002px;background:#cfcfcf;"></div>
<div style="position:absolute;left:1124.1px;top:779.4px;width:1.0px;height:25.200000000000045px;background:#9eadbc;"></div>
<div style="position:absolute;left:1124.1px;top:804.6px;width:1.0px;height:117.60000000000002px;background:#cfcfcf;"></div>
<div style="position:absolute;left:1237.1px;top:779.4px;width:1.0px;height:25.200000000000045px;background:#9eadbc;"></div>
<div style="position:absolute;left:1237.1px;top:804.6px;width:1.0px;height:117.60000000000002px;background:#cfcfcf;"></div>
<div style="position:absolute;left:1439.0px;top:779.4px;width:1.0px;height:25.200000000000045px;background:#9eadbc;"></div>
<div style="position:absolute;left:1439.0px;top:804.6px;width:1.0px;height:117.60000000000002px;background:#cfcfcf;"></div>
<div style="position:absolute;left:1552.1px;top:779.4px;width:1.0px;height:25.200000000000045px;background:#9eadbc;"></div>
<div style="position:absolute;left:1552.1px;top:804.6px;width:1.0px;height:117.60000000000002px;background:#cfcfcf;"></div>
<div class="tc" style="left:-222.10px;width:600px;top:785.24px;font-size:12px;font-weight:bold;color:#161513;"><span>Compartment</span></div>
<div class="tc" style="left:-119.15px;width:600px;top:785.24px;font-size:12px;font-weight:bold;color:#161513;"><span>Db System Name</span></div>
<div class="tc" style="left:-13.10px;width:600px;top:785.24px;font-size:12px;font-weight:bold;color:#161513;"><span>Hostname</span></div>
<div class="tc" style="left:100.85px;width:600px;top:785.24px;font-size:12px;font-weight:bold;color:#161513;"><span>Edition</span></div>
<div class="tc" style="left:223.80px;width:600px;top:785.24px;font-size:12px;font-weight:bold;color:#161513;"><span>Status</span></div>
<div class="tc" style="left:336.35px;width:600px;top:785.24px;font-size:12px;font-weight:bold;color:#161513;"><span>Last Maintenance</span></div>
<div class="tc" style="left:448.90px;width:600px;top:785.24px;font-size:12px;font-weight:bold;color:#161513;"><span>Next Maintenance</span></div>
<div class="tc" style="left:586.05px;width:600px;top:785.24px;font-size:12px;font-weight:bold;color:#161513;"><span>Maintenance Window Start</span></div>
<div class="tc" style="left:745.65px;width:600px;top:785.24px;font-size:12px;font-weight:bold;color:#161513;"><span>Maintenance Window End</span></div>
<div class="tc" style="left:881.10px;width:600px;top:785.24px;font-size:12px;font-weight:bold;color:#161513;"><span>Maintenance Type</span></div>
<div class="tc" style="left:1038.55px;width:600px;top:785.24px;font-size:12px;font-weight:bold;color:#161513;"><span>Db Nodes</span></div>
<div class="tc" style="left:1196.05px;width:600px;top:785.24px;font-size:12px;font-weight:bold;color:#161513;"><span>Node Status</span></div>
<div class="tc" style="left:1349.00px;width:600px;top:785.24px;font-size:12px;font-weight:bold;color:#161513;"><span>Created</span></div>
<div class="t" style="left:39.8px;top:817.44px;font-size:12px;color:#161513;">America</div>
<div class="t" style="left:128.6px;top:817.44px;font-size:12px;color:#161513;">OanAmericaDbDev</div>
<div class="t" style="left:245.70000000000002px;top:817.44px;font-size:12px;color:#161513;">oanamericadev</div>
<div class="t" style="left:340.7px;top:817.44px;font-size:12px;color:#161513;">STANDARD_EDITION</div>
<div style="position:absolute;left:484.0px;top:815.0px;width:80px;height:19px;background:#4caf50;border-radius:3px"></div>
<div class="tc" style="left:224.00px;width:600px;top:818.04px;font-size:12px;color:#fff;"><span>Available</span></div>
<div style="position:absolute;left:605.0px;top:815.0px;width:64px;height:19px;background:#9e9e9e;border-radius:3px"></div>
<div class="tc" style="left:337.00px;width:600px;top:818.04px;font-size:12px;color:#fff;"><span>NONE</span></div>
<div style="position:absolute;left:717.0px;top:815.0px;width:64px;height:19px;background:#9e9e9e;border-radius:3px"></div>
<div class="tc" style="left:449.00px;width:600px;top:818.04px;font-size:12px;color:#fff;"><span>NONE</span></div>
<div class="t" style="left:811.6999999999999px;top:817.44px;font-size:12px;color:#161513;">No maintenance scheduled</div>
<div class="t" style="left:973.0px;top:817.44px;font-size:12px;color:#161513;">No maintenance scheduled</div>
<div class="t" style="left:1243.8999999999999px;top:817.44px;font-size:12px;color:#161513;">oanamericadev (FAULT-DOMAIN-3)</div>
<div style="position:absolute;left:1456.0px;top:815.0px;width:80px;height:19px;background:#4caf50;border-radius:3px"></div>
<div class="tc" style="left:1196.00px;width:600px;top:818.04px;font-size:12px;color:#fff;"><span>AVAILABLE</span></div>
<div class="t" style="left:1558.8999999999999px;top:817.44px;font-size:12px;color:#161513;">Fri, Dec 01, 2023, 14:55:02 UTC</div>
<div class="t" style="left:39.8px;top:856.04px;font-size:12px;color:#161513;">America</div>
<div class="t" style="left:128.6px;top:856.04px;font-size:12px;color:#161513;">wcc-db</div>
<div class="t" style="left:245.70000000000002px;top:856.04px;font-size:12px;color:#161513;">wcc</div>
<div class="t" style="left:340.7px;top:856.04px;font-size:12px;color:#161513;">STANDARD_EDITION</div>
<div style="position:absolute;left:484.0px;top:854.0px;width:80px;height:19px;background:#4caf50;border-radius:3px"></div>
<div class="tc" style="left:224.00px;width:600px;top:857.04px;font-size:12px;color:#fff;"><span>Available</span></div>
<div style="position:absolute;left:605.0px;top:854.0px;width:64px;height:19px;background:#9e9e9e;border-radius:3px"></div>
<div class="tc" style="left:337.00px;width:600px;top:857.04px;font-size:12px;color:#fff;"><span>NONE</span></div>
<div style="position:absolute;left:717.0px;top:854.0px;width:64px;height:19px;background:#9e9e9e;border-radius:3px"></div>
<div class="tc" style="left:449.00px;width:600px;top:857.04px;font-size:12px;color:#fff;"><span>NONE</span></div>
<div class="t" style="left:811.6999999999999px;top:856.04px;font-size:12px;color:#161513;">No maintenance scheduled</div>
<div class="t" style="left:973.0px;top:856.04px;font-size:12px;color:#161513;">No maintenance scheduled</div>
<div class="t" style="left:1243.8999999999999px;top:856.04px;font-size:12px;color:#161513;">wcc (FAULT-DOMAIN-1)</div>
<div style="position:absolute;left:1456.0px;top:854.0px;width:80px;height:19px;background:#f44336;border-radius:3px"></div>
<div class="tc" style="left:1196.00px;width:600px;top:857.04px;font-size:12px;color:#fff;"><span>STOPPED</span></div>
<div class="t" style="left:1558.8999999999999px;top:856.04px;font-size:12px;color:#161513;">Mon, Jun 10, 2024, 18:09:25 UTC</div>
<div class="t" style="left:39.8px;top:895.54px;font-size:12px;color:#161513;">PROD</div>
<div class="t" style="left:128.6px;top:895.54px;font-size:12px;color:#161513;">HQDB1</div>
<div class="t" style="left:245.70000000000002px;top:895.54px;font-size:12px;color:#161513;">hqapexdb</div>
<div class="t" style="left:340.7px;top:895.54px;font-size:12px;color:#161513;">STANDARD_EDITION</div>
<div style="position:absolute;left:484.0px;top:894.0px;width:80px;height:19px;background:#4caf50;border-radius:3px"></div>
<div class="tc" style="left:224.00px;width:600px;top:897.04px;font-size:12px;color:#fff;"><span>Available</span></div>
<div style="position:absolute;left:605.0px;top:894.0px;width:64px;height:19px;background:#9e9e9e;border-radius:3px"></div>
<div class="tc" style="left:337.00px;width:600px;top:897.04px;font-size:12px;color:#fff;"><span>NONE</span></div>
<div style="position:absolute;left:717.0px;top:894.0px;width:64px;height:19px;background:#9e9e9e;border-radius:3px"></div>
<div class="tc" style="left:449.00px;width:600px;top:897.04px;font-size:12px;color:#fff;"><span>NONE</span></div>
<div class="t" style="left:811.6999999999999px;top:895.54px;font-size:12px;color:#161513;">No maintenance scheduled</div>
<div class="t" style="left:973.0px;top:895.54px;font-size:12px;color:#161513;">No maintenance scheduled</div>
<div class="t" style="left:1243.8999999999999px;top:895.54px;font-size:12px;color:#161513;">hqapexdb (FAULT-DOMAIN-1)</div>
<div style="position:absolute;left:1456.0px;top:894.0px;width:80px;height:19px;background:#4caf50;border-radius:3px"></div>
<div class="tc" style="left:1196.00px;width:600px;top:897.04px;font-size:12px;color:#fff;"><span>AVAILABLE</span></div>
<div class="t" style="left:1558.8999999999999px;top:895.54px;font-size:12px;color:#161513;">Mon, Aug 26, 2024, 21:34:40 UTC</div>
<div class="tr" style="left:1335px;width:400px;top:934.44px;font-size:12px;color:#161513;"><span>1 - 3</span></div>
</body></html>
